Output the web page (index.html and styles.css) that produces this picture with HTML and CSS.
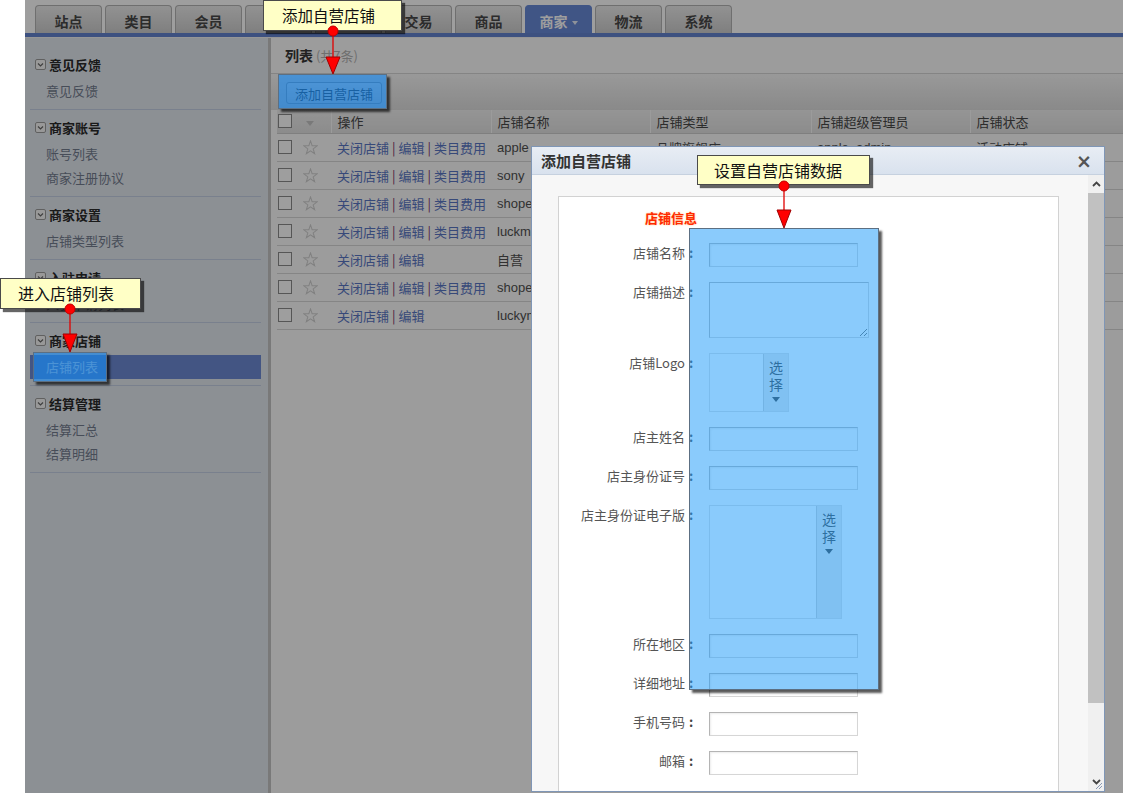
FILE: index.html
```html
<!DOCTYPE html>
<html lang="zh-CN">
<head>
<meta charset="utf-8">
<title>商家 - 店铺列表</title>
<link rel="stylesheet" href="styles.css">
</head>
<body>
<div class="screen">
  <header class="topbar">
    <nav class="tabs">
      <a class="tab">站点</a>
      <a class="tab">类目</a>
      <a class="tab">会员</a>
      <a class="tab">店铺</a>
      <a class="tab">营销</a>
      <a class="tab">交易</a>
      <a class="tab">商品</a>
      <a class="tab active">商家<i class="caret"></i></a>
      <a class="tab">物流</a>
      <a class="tab">系统</a>
    </nav>
  </header>
  <div class="main">
    <aside class="sidebar">
      <section class="group">
        <h3><span class="toggle"><svg viewBox="0 0 9 9" width="9" height="9"><path d="M2 3.5 L4.5 6 L7 3.5" fill="none" stroke="#666" stroke-width="1.2"/></svg></span>意见反馈</h3>
        <ul><li>意见反馈</li></ul>
      </section>
      <section class="group">
        <h3><span class="toggle"><svg viewBox="0 0 9 9" width="9" height="9"><path d="M2 3.5 L4.5 6 L7 3.5" fill="none" stroke="#666" stroke-width="1.2"/></svg></span>商家账号</h3>
        <ul><li>账号列表</li><li>商家注册协议</li></ul>
      </section>
      <section class="group">
        <h3><span class="toggle"><svg viewBox="0 0 9 9" width="9" height="9"><path d="M2 3.5 L4.5 6 L7 3.5" fill="none" stroke="#666" stroke-width="1.2"/></svg></span>商家设置</h3>
        <ul><li>店铺类型列表</li></ul>
      </section>
      <section class="group">
        <h3><span class="toggle"><svg viewBox="0 0 9 9" width="9" height="9"><path d="M2 3.5 L4.5 6 L7 3.5" fill="none" stroke="#666" stroke-width="1.2"/></svg></span>入驻申请</h3>
        <ul><li>入驻申请列表</li></ul>
      </section>
      <section class="group">
        <h3><span class="toggle"><svg viewBox="0 0 9 9" width="9" height="9"><path d="M2 3.5 L4.5 6 L7 3.5" fill="none" stroke="#666" stroke-width="1.2"/></svg></span>商家店铺</h3>
        <ul><li class="on">店铺列表</li></ul>
      </section>
      <section class="group">
        <h3><span class="toggle"><svg viewBox="0 0 9 9" width="9" height="9"><path d="M2 3.5 L4.5 6 L7 3.5" fill="none" stroke="#666" stroke-width="1.2"/></svg></span>结算管理</h3>
        <ul><li>结算汇总</li><li>结算明细</li></ul>
      </section>
    </aside>
    <section class="content">
      <div class="page-title"><b>列表</b> <span>(共7条)</span></div>
      <div class="toolbar"><button class="btn">添加自营店铺</button></div>
      <table class="grid">
        <colgroup>
          <col class="c-chk"><col class="c-star"><col class="c-op"><col class="c-name"><col class="c-type"><col class="c-admin"><col>
        </colgroup>
        <thead>
          <tr>
            <th class="cell-chk"><span class="chk"></span></th>
            <th class="cell-sort"><span class="sort-arrow"></span></th>
            <th>操作</th>
            <th>店铺名称</th>
            <th>店铺类型</th>
            <th>店铺超级管理员</th>
            <th>店铺状态</th>
          </tr>
        </thead>
        <tbody>
          <tr>
            <td class="cell-chk"><span class="chk"></span></td>
            <td class="cell-star"><svg class="star" viewBox="0 0 16 16"><polygon points="8,1 9.76,6.07 15.13,6.18 10.85,9.43 12.41,14.57 8,11.5 3.59,14.57 5.15,9.43 0.87,6.18 6.24,6.07"/></svg></td>
            <td class="ops"><a>关闭店铺</a><i>|</i><a>编辑</a><i>|</i><a>类目费用</a></td>
            <td>apple</td><td>品牌旗舰店</td><td>apple_admin</td><td>活动店铺</td>
          </tr>
          <tr>
            <td class="cell-chk"><span class="chk"></span></td>
            <td class="cell-star"><svg class="star" viewBox="0 0 16 16"><polygon points="8,1 9.76,6.07 15.13,6.18 10.85,9.43 12.41,14.57 8,11.5 3.59,14.57 5.15,9.43 0.87,6.18 6.24,6.07"/></svg></td>
            <td class="ops"><a>关闭店铺</a><i>|</i><a>编辑</a><i>|</i><a>类目费用</a></td>
            <td>sony</td><td>品牌旗舰店</td><td>sony_admin</td><td>活动店铺</td>
          </tr>
          <tr>
            <td class="cell-chk"><span class="chk"></span></td>
            <td class="cell-star"><svg class="star" viewBox="0 0 16 16"><polygon points="8,1 9.76,6.07 15.13,6.18 10.85,9.43 12.41,14.57 8,11.5 3.59,14.57 5.15,9.43 0.87,6.18 6.24,6.07"/></svg></td>
            <td class="ops"><a>关闭店铺</a><i>|</i><a>编辑</a><i>|</i><a>类目费用</a></td>
            <td>shopex</td><td>专营店</td><td>shopex_admin</td><td>活动店铺</td>
          </tr>
          <tr>
            <td class="cell-chk"><span class="chk"></span></td>
            <td class="cell-star"><svg class="star" viewBox="0 0 16 16"><polygon points="8,1 9.76,6.07 15.13,6.18 10.85,9.43 12.41,14.57 8,11.5 3.59,14.57 5.15,9.43 0.87,6.18 6.24,6.07"/></svg></td>
            <td class="ops"><a>关闭店铺</a><i>|</i><a>编辑</a><i>|</i><a>类目费用</a></td>
            <td>luckme</td><td>专卖店</td><td>luckme</td><td>活动店铺</td>
          </tr>
          <tr>
            <td class="cell-chk"><span class="chk"></span></td>
            <td class="cell-star"><svg class="star" viewBox="0 0 16 16"><polygon points="8,1 9.76,6.07 15.13,6.18 10.85,9.43 12.41,14.57 8,11.5 3.59,14.57 5.15,9.43 0.87,6.18 6.24,6.07"/></svg></td>
            <td class="ops"><a>关闭店铺</a><i>|</i><a>编辑</a></td>
            <td>自营（官方）</td><td>自营店铺</td><td>admin</td><td>活动店铺</td>
          </tr>
          <tr>
            <td class="cell-chk"><span class="chk"></span></td>
            <td class="cell-star"><svg class="star" viewBox="0 0 16 16"><polygon points="8,1 9.76,6.07 15.13,6.18 10.85,9.43 12.41,14.57 8,11.5 3.59,14.57 5.15,9.43 0.87,6.18 6.24,6.07"/></svg></td>
            <td class="ops"><a>关闭店铺</a><i>|</i><a>编辑</a><i>|</i><a>类目费用</a></td>
            <td>shopex2</td><td>专营店</td><td>shopex2</td><td>活动店铺</td>
          </tr>
          <tr>
            <td class="cell-chk"><span class="chk"></span></td>
            <td class="cell-star"><svg class="star" viewBox="0 0 16 16"><polygon points="8,1 9.76,6.07 15.13,6.18 10.85,9.43 12.41,14.57 8,11.5 3.59,14.57 5.15,9.43 0.87,6.18 6.24,6.07"/></svg></td>
            <td class="ops"><a>关闭店铺</a><i>|</i><a>编辑</a></td>
            <td>luckyman</td><td>自营店铺</td><td>luckyman</td><td>活动店铺</td>
          </tr>
        </tbody>
      </table>
    </section>
  </div>

  <div class="mask"></div>

  <div class="dialog">
    <div class="dialog-head">
      <span class="dialog-title">添加自营店铺</span>
      <span class="dialog-close">×</span>
    </div>
    <div class="dialog-body">
      <div class="dialog-scroll">
        <div class="form-panel">
          <h4 class="section-title">店铺信息</h4>
          <div class="form">
            <label>店铺名称<span class="colon">:</span></label><input class="txt" type="text">
            <label>店铺描述<span class="colon">:</span></label><textarea class="area"></textarea>
            <label>店铺Logo<span class="colon">:</span></label>
            <div class="upload up-logo"><div class="preview"></div><div class="pick">选择<svg viewBox="0 0 8 5" width="8" height="5"><path d="M0 0 H8 L4 5 Z" fill="#333"/></svg></div></div>
            <label>店主姓名<span class="colon">:</span></label><input class="txt" type="text">
            <label>店主身份证号<span class="colon">:</span></label><input class="txt" type="text">
            <label>店主身份证电子版<span class="colon">:</span></label>
            <div class="upload up-id"><div class="preview"></div><div class="pick">选择<svg viewBox="0 0 8 5" width="8" height="5"><path d="M0 0 H8 L4 5 Z" fill="#333"/></svg></div></div>
            <label>所在地区<span class="colon">:</span></label><input class="txt" type="text">
            <label>详细地址<span class="colon">:</span></label><input class="txt" type="text">
            <label>手机号码<span class="colon">:</span></label><input class="txt" type="text">
            <label>邮箱<span class="colon">:</span></label><input class="txt" type="text">
          </div>
        </div>
      </div>
      <div class="vscroll">
        <span class="sb-btn"><svg viewBox="0 0 9 6" width="9" height="6"><path d="M1 5 L4.5 1.5 L8 5" fill="none" stroke="#444" stroke-width="1.8"/></svg></span>
        <span class="sb-thumb"></span>
        <span class="sb-track"></span>
        <span class="sb-btn"><svg viewBox="0 0 9 6" width="9" height="6"><path d="M1 1 L4.5 4.5 L8 1" fill="none" stroke="#444" stroke-width="1.8"/></svg></span>
      </div>
    </div>
    <svg class="grip" viewBox="0 0 8 8" width="8" height="8"><path d="M7 1 L1 7 M7 4 L4 7" stroke="#8a9ab5" stroke-width="1"/></svg>
  </div>
</div>

<div class="hl hl-btn"></div>
<div class="hl hl-menu"></div>
<div class="hl hl-form"></div>

<div class="note note-1">添加自营店铺</div>
<div class="note note-2">进入店铺列表</div>
<div class="note note-3">设置自营店铺数据</div>

<svg class="pin pin-1" viewBox="0 0 16 50" width="16" height="50"><line x1="8" y1="6" x2="8" y2="33" stroke="#e00000" stroke-width="1.3"/><polygon points="1,32 15,32 8,49" fill="#ff0000" stroke="#a00000" stroke-width="1"/><circle cx="8" cy="6" r="5" fill="#ff0000" stroke="#c00000" stroke-width="1"/></svg>
<svg class="pin pin-2" viewBox="0 0 16 50" width="16" height="50"><line x1="8" y1="6" x2="8" y2="32" stroke="#e00000" stroke-width="1.3"/><polygon points="1,31 15,31 8,49" fill="#ff0000" stroke="#a00000" stroke-width="1"/><circle cx="8" cy="6" r="5" fill="#ff0000" stroke="#c00000" stroke-width="1"/></svg>
<svg class="pin pin-3" viewBox="0 0 16 50" width="16" height="50"><line x1="8" y1="6" x2="8" y2="31" stroke="#e00000" stroke-width="1.3"/><polygon points="1,30 15,30 8,48" fill="#ff0000" stroke="#a00000" stroke-width="1"/><circle cx="8" cy="6" r="5" fill="#ff0000" stroke="#c00000" stroke-width="1"/></svg>
</body>
</html>
```

FILE: styles.css
```css
* { box-sizing: border-box; margin: 0; padding: 0; }

html, body { width: 1123px; height: 795px; }

body {
  position: relative;
  overflow: hidden;
  background: #fff;
  font-family: "Liberation Sans", "Noto Sans CJK SC", sans-serif;
  font-size: 13px;
  color: #333;
}

ul { list-style: none; }
a { text-decoration: none; }

/* ---------- captured admin screen ---------- */
.screen {
  position: relative;
  margin-left: 25px;
  width: 1098px;
  height: 793px;
  overflow: hidden;
  background: #fff;
}

.topbar {
  height: 38px;
  padding-top: 5px;
  background: #fff;
  border-bottom: 1px solid #f2f2f2;
}

.tabs {
  display: flex;
  gap: 3px;
  padding-left: 10px;
  height: 28px;
  border-bottom: 4px solid #6384cf;
  box-sizing: content-box;
}

.tab {
  width: 67px;
  height: 28px;
  overflow: hidden;
  border: 1px solid #b3b3b3;
  border-bottom: none;
  border-radius: 4px 4px 0 0;
  background: linear-gradient(#ececec, #cdcdcd);
  color: #474747;
  font-weight: bold;
  font-size: 14px;
  line-height: 30px;
  text-align: center;
  font-family: "Noto Sans CJK SC", sans-serif;
}

.tab.active {
  background: #6889d7;
  border-color: #6889d7;
  color: #fff;
}

.caret {
  display: inline-block;
  margin-left: 4px;
  vertical-align: middle;
  border-left: 3px solid transparent;
  border-right: 3px solid transparent;
  border-top: 4px solid #e6ecf8;
}

.main {
  display: flex;
  height: 755px;
}

.sidebar {
  width: 246px;
  flex: none;
  padding-top: 9px;
  background: #e3e8ef;
  border-right: 3px solid #c4c4c4;
}

.group {
  margin: 0 7px 0 5px;
  padding: 7px 0 6px;
  border-bottom: 1px solid #c3cfe4;
}

.group h3 {
  display: flex;
  align-items: center;
  gap: 3px;
  padding-left: 5px;
  height: 20px;
  margin-bottom: 5px;
  font-size: 13px;
  font-weight: bold;
  color: #2a2a2a;
  font-family: "Noto Sans CJK SC", sans-serif;
}

.toggle {
  display: flex;
  align-items: center;
  justify-content: center;
  width: 11px;
  height: 11px;
  border: 1px solid #9c9c9c;
  border-radius: 2px;
  background: #f6f6f6;
}

.group li {
  height: 24px;
  line-height: 24px;
  padding-left: 16px;
  color: #737d8f;
  font-family: "Noto Sans CJK SC", sans-serif;
}

.group li.on {
  background: #6c89d3;
  color: #fff;
}

.content {
  flex: 1;
  background: #fcfcfc;
}

.page-title {
  height: 35px;
  padding: 7px 0 0 14px;
  line-height: 20px;
  font-family: "Noto Sans CJK SC", sans-serif;
}

.page-title b { font-size: 14px; color: #363636; }
.page-title span { font-size: 13px; color: #b3b3b3; }

.toolbar {
  height: 37px;
  padding: 8px 0 0 15px;
  border-top: 1px solid #d6d6d6;
  background: linear-gradient(#f7f7f7, #dedede);
}

.btn {
  height: 22px;
  padding: 0 8px;
  border: 1px solid #a5a5a5;
  border-radius: 3px;
  background: linear-gradient(#ffffff, #e4e4e4);
  font: 13px "Noto Sans CJK SC", sans-serif;
  color: #333;
}

.grid {
  margin-left: 6px;
  width: calc(100% - 6px);
  table-layout: fixed;
  border-collapse: collapse;
}

.c-chk { width: 23px; }
.c-star { width: 31px; }
.c-op { width: 160px; }
.c-name { width: 159px; }
.c-type { width: 161px; }
.c-admin { width: 159px; }

.grid th {
  height: 23px;
  padding-left: 6px;
  text-align: left;
  font-weight: normal;
  color: #474747;
  background: linear-gradient(#f0f0f0, #e2e2e2);
  border-bottom: 1px solid #cdcdcd;
  border-left: 1px solid #fafafa;
  font-family: "Noto Sans CJK SC", sans-serif;
  white-space: nowrap;
}

.grid th.cell-chk, .grid th.cell-sort { border-left: none; }

.grid td {
  height: 28px;
  padding-left: 6px;
  border-bottom: 1px solid #d7d7d7;
  color: #505050;
  white-space: nowrap;
  overflow: hidden;
}

.grid .cell-chk { padding-left: 1px; }
.grid .cell-star { padding-left: 3px; }
.grid .cell-sort { padding-left: 6px; }

.chk {
  display: block;
  width: 14px;
  height: 14px;
  border: 1px solid #8c8c8c;
  background: #fff;
}

.sort-arrow {
  display: inline-block;
  border-left: 4px solid transparent;
  border-right: 4px solid transparent;
  border-top: 5px solid #c4c4c4;
  vertical-align: middle;
}

.star {
  display: block;
  width: 15px;
  height: 15px;
  fill: none;
  stroke: #cfcfcf;
  stroke-width: 1.1;
}

.ops { font-family: "Noto Sans CJK SC", sans-serif; }
.ops a { color: #5a76c4; }
.ops i { font-style: normal; color: #7f2f66; padding: 0 3px; }

.mask {
  position: absolute;
  inset: 0;
  background: rgba(0, 0, 0, 0.38);
}

/* ---------- dialog ---------- */
.dialog {
  position: absolute;
  left: 506px;
  top: 146px;
  width: 574px;
  height: 646px;
  display: flex;
  flex-direction: column;
  border: 1px solid #7f96b6;
  background: #f7f7f7;
}

.dialog-head {
  height: 28px;
  flex: none;
  display: flex;
  align-items: center;
  justify-content: space-between;
  padding: 0 12px 0 9px;
  background: linear-gradient(#e8edf4, #d9e2ee);
  border-bottom: 1px solid #c6d1df;
}

.dialog-title {
  font: bold 15px "Noto Sans CJK SC", sans-serif;
  color: #333;
}

.dialog-close {
  font: bold 19px "DejaVu Sans", sans-serif;
  color: #555;
  line-height: 20px;
}

.dialog-body {
  flex: 1;
  display: flex;
  min-height: 0;
}

.dialog-scroll {
  flex: 1;
  overflow: hidden;
  padding: 21px 0 0 26px;
}

.form-panel {
  width: 501px;
  height: 700px;
  background: #fff;
  border: 1px solid #d2d2d2;
}

.section-title {
  margin: 12px 0 16px 86px;
  font: bold 13px/18px "Noto Sans CJK SC", sans-serif;
  color: #ff2a00;
  text-shadow: 0 0 2px #ffc080;
}

.form {
  display: grid;
  grid-template-columns: 138px auto;
  column-gap: 12px;
  row-gap: 15px;
  align-items: start;
  justify-items: start;
}

.form label {
  justify-self: end;
  line-height: 19px;
  color: #555;
  font-family: "Noto Sans CJK SC", sans-serif;
  white-space: nowrap;
}

.colon {
  display: inline-block;
  width: 12px;
  text-align: center;
  font-weight: bold;
  color: #444;
}

.txt {
  width: 149px;
  height: 24px;
  border: 1px solid;
  border-color: #b4b4b4 #d6d6d6 #d6d6d6 #b4b4b4;
  box-shadow: inset 1px 1px 2px rgba(0, 0, 0, 0.08);
  background: #fff;
}

.area {
  width: 160px;
  height: 56px;
  border: 1px solid;
  border-color: #b4b4b4 #d6d6d6 #d6d6d6 #b4b4b4;
  background: #fff;
  resize: both;
}

.upload {
  display: flex;
  border: 1px solid #dedede;
  background: #fff;
}

.up-logo { width: 80px; height: 59px; }
.up-id { width: 133px; height: 114px; }

.upload .preview { flex: 1; }

.pick {
  width: 25px;
  display: flex;
  flex-direction: column;
  align-items: center;
  padding-top: 5px;
  border-left: 1px solid #c9c9c9;
  background: #e9e9e9;
  font: 14px/17px "Noto Sans CJK SC", sans-serif;
  color: #333;
  text-align: center;
  word-break: break-all;
}

.pick svg { margin-top: 4px; }

.vscroll {
  width: 16px;
  flex: none;
  display: flex;
  flex-direction: column;
  background: #f0f0f0;
}

.sb-btn {
  height: 18px;
  flex: none;
  display: flex;
  align-items: center;
  justify-content: center;
}

.sb-thumb {
  height: 510px;
  flex: none;
  background: #c1c1c1;
}

.sb-track { flex: 1; }

.grip {
  position: absolute;
  right: 1px;
  bottom: 1px;
}

/* ---------- tutorial annotations ---------- */
.hl {
  position: absolute;
  border: 1px solid #5c6f82;
  box-shadow: 3px 3px 2px rgba(0, 0, 0, 0.65);
}

.hl-btn {
  left: 278px;
  top: 74px;
  width: 109px;
  height: 35px;
  background: rgba(20, 140, 250, 0.6);
}

.hl-menu {
  left: 33px;
  top: 352px;
  width: 74px;
  height: 30px;
  background: rgba(20, 140, 250, 0.6);
}

.hl-form {
  left: 689px;
  top: 228px;
  width: 190px;
  height: 462px;
  background: rgba(42, 160, 250, 0.55);
}

.note {
  position: absolute;
  height: 31px;
  background: #ffffc6;
  border: 1px solid #4a4a4a;
  box-shadow: 3px 3px 1px rgba(0, 0, 0, 0.6);
  font-family: "Noto Sans CJK SC", sans-serif;
  color: #111;
  line-height: 29px;
  white-space: nowrap;
}

.note-1 { left: 263px; top: 0; width: 139px; padding-left: 18px; font-size: 15.5px; }
.note-2 { left: 0; top: 278px; width: 141px; padding-left: 17px; font-size: 16px; }
.note-3 { left: 697px; top: 155px; width: 173px; height: 30px; padding-left: 16px; font-size: 16px; line-height: 28px; }

.pin { position: absolute; overflow: visible; }
.pin-1 { left: 325px; top: 25px; }
.pin-2 { left: 62px; top: 303px; }
.pin-3 { left: 776px; top: 180px; }
```
